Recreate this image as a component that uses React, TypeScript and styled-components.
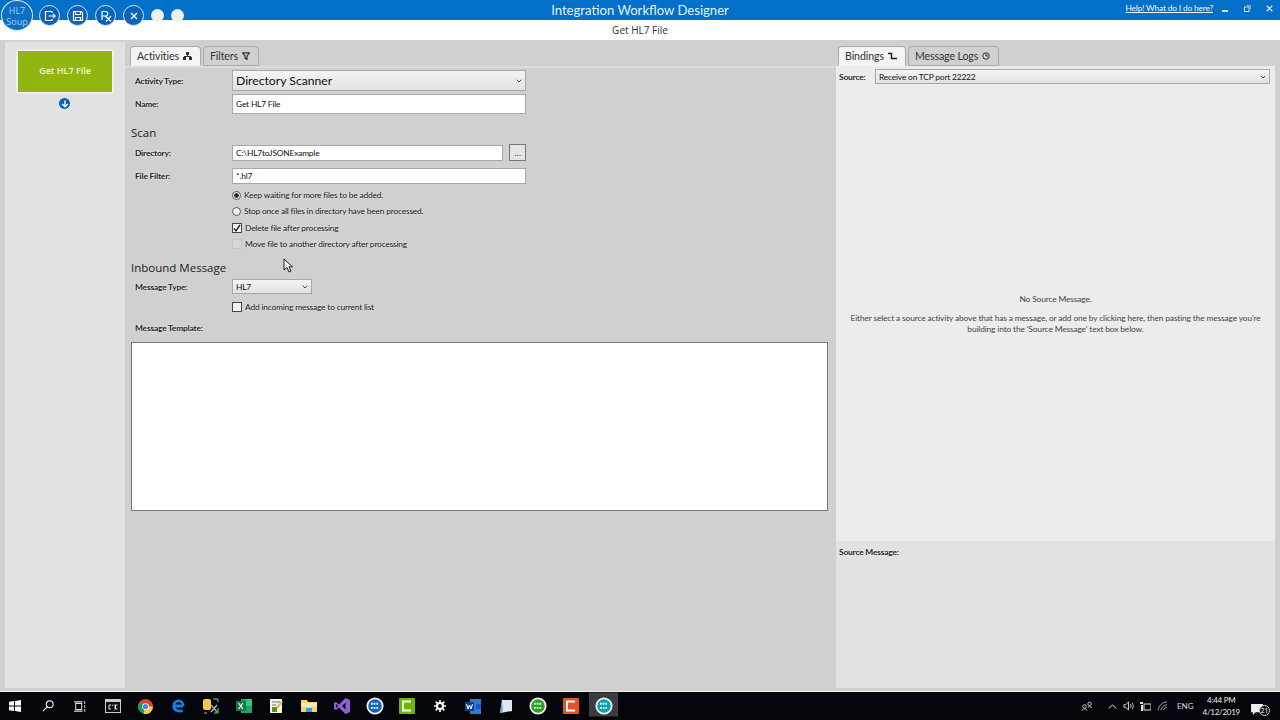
import React from "react";
import styled, { createGlobalStyle } from "styled-components";

const GlobalStyle = createGlobalStyle`
  html, body { margin: 0; padding: 0; background: #d0d0d0; }
  body { font-family: "Open Sans", "Noto Sans", "Liberation Sans", sans-serif; color: #1a1a1a; }
  * { box-sizing: border-box; }
`;

const SMALL_FONT = `font-family: Lato, "Open Sans", sans-serif; font-size: 8.4px; letter-spacing: -0.18px;`;

const TOOLBAR = ["exit", "save", "rx", "close"];

const ToolIcon: React.FC<{ kind: string }> = ({ kind }) => (
  <svg width="12" height="12" viewBox="0 0 12 12" fill="none" stroke="#fff" strokeWidth="1.2">
    {kind === "exit" && <path d="M8 3V1.500H1.500v9H8V9M4.500 6h7M9 3.800 11.200 6 9 8.200" />}
    {kind === "save" && <path d="M1.500 1.500h8l1 1v8h-9zM3.500 1.500v3h5v-3M3.500 10.500V7.500h5v3" />}
    {kind === "rx" && <path d="M2 10V1.500h3.500a2.200 2.200 0 0 1 0 4.500H2M5 6l6 5.500M11 6l-5 5.500" />}
    {kind === "close" && <path d="M3 3l6 6M9 3 3 9" strokeWidth="1.400" />}
  </svg>
);

const Diagram = () => (
  <svg width="9" height="8" viewBox="0 0 9 8" fill="#333">
    <rect x="3" y="0" width="3" height="3" />
    <rect x="0" y="5" width="3" height="3" />
    <rect x="6" y="5" width="3" height="3" />
    <rect x="4" y="3" width="1" height="2" />
    <rect x="1" y="4" width="7" height="1" />
  </svg>
);

const Funnel = () => (
  <svg width="8" height="8" viewBox="0 0 8 8" fill="none" stroke="#333" strokeWidth="1.2">
    <path d="M.5.8h7L5 4v3.400L3 6.400V4z" />
  </svg>
);

const Step = () => (
  <svg width="9" height="8" viewBox="0 0 9 8" fill="none" stroke="#222" strokeWidth="1.500">
    <path d="M0 1.500h3.500v5H9" />
  </svg>
);

const Clock = () => (
  <svg width="8" height="8" viewBox="0 0 8 8" fill="none" stroke="#333">
    <circle cx="4" cy="4" r="3.200" />
    <path d="M4 2v2h2" />
  </svg>
);

const Caret = () => (
  <svg width="6" height="4" viewBox="0 0 6 4" fill="none" stroke="#444" strokeWidth="1">
    <path d="M.7.7 3 3 5.300.7" />
  </svg>
);

const SoupBadge: React.FC<{ color: string }> = ({ color }) => (
  <svg width="18" height="18" viewBox="0 0 20 20">
    <circle cx="10" cy="10" r="9.500" fill="#f4f4f4" />
    <circle cx="10" cy="10" r="7.500" fill={color} />
    <path d="M5.500 7.500h9M5.500 12h9" stroke="#dff" strokeWidth="2" strokeDasharray="2 1" />
  </svg>
);

const TASK_ICONS: { name: string; open?: boolean; active?: boolean; icon: React.ReactNode }[] = [
  {
    name: "start",
    icon: (
      <svg width="12" height="12" viewBox="0 0 13 13" fill="#fff">
        <path d="M0 2 5.500 1.200V6H0zM6.500 1 13 0v6H6.500zM0 7h5.500v4.800L0 11zM6.500 7H13v6l-6.500-1z" />
      </svg>
    ),
  },
  {
    name: "search",
    icon: (
      <svg width="12" height="12" viewBox="0 0 14 14" fill="none" stroke="#fff" strokeWidth="1.200">
        <circle cx="9" cy="5" r="4" />
        <path d="M6 8 1 13" />
      </svg>
    ),
  },
  {
    name: "tasks",
    icon: (
      <svg width="12" height="11" viewBox="0 0 14 12" fill="none" stroke="#ddd" strokeWidth="1.200">
        <rect x="2" y="2.500" width="7" height="7" />
        <path d="M0 .6h10M0 11.400h10M12.500 0v3M12.500 4.500v3M12.500 9v3" />
      </svg>
    ),
  },
  {
    name: "console",
    icon: (
      <svg width="16" height="14" viewBox="0 0 16 14">
        <rect x=".5" y=".5" width="15" height="13" fill="#111" stroke="#ccc" />
        <rect x="1" y="1" width="14" height="2" fill="#ccc" />
        <path d="M6 6H4v4h2M8 5.500 7 7M10 5.500v5M12.500 6h-2v4h2" stroke="#ddd" fill="none" />
      </svg>
    ),
  },
  {
    name: "chrome",
    icon: (
      <svg width="15" height="15" viewBox="0 0 16 16">
        <circle cx="8" cy="8" r="8" fill="#db4437" />
        <path d="M8 8 1 4.200A8 8 0 0 0 6 15.800z" fill="#0f9d58" />
        <path d="M8 8h8a8 8 0 0 1-10 7.800z" fill="#ffcd40" />
        <circle cx="8" cy="8" r="3.600" fill="#fff" />
        <circle cx="8" cy="8" r="2.800" fill="#4285f4" />
      </svg>
    ),
  },
  {
    name: "edge",
    icon: (
      <svg width="14" height="14" viewBox="0 0 15 15" fill="none" stroke="#0a84e6" strokeWidth="3">
        <path d="M13 7.500H3M3 7.500C3 3.500 6 2 8 2s5 1.500 5 5.500M3 7.500C3 11.500 7 14 12.500 12.500" />
      </svg>
    ),
  },
  {
    name: "db",
    icon: (
      <svg width="16" height="16" viewBox="0 0 16 16">
        <rect x="0" y="1" width="8" height="11" rx="2" fill="#f2c94c" />
        <path d="M10 1h5v3M1 15h3M15 10v5h-4" stroke="#8bc48a" fill="none" />
        <path d="M8 14 14 7M8 7l6 7" stroke="#aaa" strokeWidth="1.600" />
      </svg>
    ),
  },
  {
    name: "excel",
    icon: (
      <svg width="16" height="14" viewBox="0 0 16 14">
        <rect x="5" y="0" width="11" height="14" fill="#21a366" />
        <rect x="10" y="0" width="6" height="7" fill="#33c481" />
        <rect x="0" y="2" width="10" height="10" fill="#107c41" />
        <path d="M2.500 4 7 10M7 4l-4.500 6" stroke="#fff" strokeWidth="1.200" />
      </svg>
    ),
  },
  {
    name: "notes",
    icon: (
      <svg width="15" height="16" viewBox="0 0 15 16">
        <rect x="1" y="1" width="12" height="14" fill="#f4f4e4" />
        <path d="M3 4h8M3 7h4" stroke="#777" />
        <path d="M3 13 13 3l1 1L6 13z" fill="#e0b030" />
        <rect x="3" y="9" width="5" height="5" fill="#5a8e2a" />
      </svg>
    ),
  },
  {
    name: "folder",
    open: true,
    icon: (
      <svg width="16" height="14" viewBox="0 0 16 14">
        <path d="M0 1h6l1 2h9v10H0z" fill="#f6d365" />
        <rect x="0" y="4" width="16" height="4" fill="#fbe9a8" />
        <path d="M5 13V9h6v4" fill="#3aa0d8" />
      </svg>
    ),
  },
  {
    name: "vs",
    open: true,
    icon: (
      <svg width="16" height="16" viewBox="0 0 16 16" fill="#8e5fd3">
        <path d="M11.500 0 16 2v12l-4.500 2L5 9.500 2 12 0 11V5l2-1 3 2.500zM11.500 4.500 8 8l3.500 3.500zM2 6v4l2-2z" />
      </svg>
    ),
  },
  { name: "hl7-blue", open: true, icon: <SoupBadge color="#1565c0" /> },
  {
    name: "camtasia",
    open: true,
    icon: (
      <svg width="16" height="16" viewBox="0 0 16 16">
        <rect width="16" height="16" rx="1" fill="#6ab800" />
        <path d="M12 3.500H4v9h8" stroke="#fff" strokeWidth="2" fill="none" />
      </svg>
    ),
  },
  {
    name: "gear",
    open: true,
    icon: (
      <svg width="12" height="12" viewBox="0 0 14 14" fill="none" stroke="#fff">
        <circle cx="7" cy="7" r="3.500" strokeWidth="2.500" />
        <path d="M7 0v2.500M7 11.500V14M0 7h2.500M11.500 7H14M2 2l1.800 1.800M10.200 10.200 12 12M12 2l-1.800 1.800M3.800 10.200 2 12" strokeWidth="2" />
      </svg>
    ),
  },
  {
    name: "word",
    open: true,
    icon: (
      <svg width="16" height="15" viewBox="0 0 16 15">
        <rect x="5" y="0" width="11" height="15" fill="#2b7cd3" />
        <rect x="11" y="5" width="5" height="5" fill="#185abd" />
        <rect x="0" y="3" width="9" height="9" fill="#103f91" />
        <path d="M1.500 5 3 10l1.500-4L6 10l1.500-5" stroke="#fff" fill="none" />
      </svg>
    ),
  },
  {
    name: "tablet",
    icon: (
      <svg width="15" height="15" viewBox="0 0 15 15">
        <path d="M4 1h10v11l-12 2z" fill="#dfe8ee" />
        <path d="M4 1 2 14l3-2z" fill="#6ea8c8" />
      </svg>
    ),
  },
  { name: "hl7-green", open: true, icon: <SoupBadge color="#2f9e1f" /> },
  {
    name: "camtasia-red",
    open: true,
    icon: (
      <svg width="16" height="16" viewBox="0 0 16 16">
        <rect width="16" height="16" rx="1" fill="#e8502a" />
        <path d="M12 3.500H4v9h8" stroke="#fff" strokeWidth="2" fill="none" />
      </svg>
    ),
  },
  { name: "hl7-teal", open: true, active: true, icon: <SoupBadge color="#0aa0b0" /> },
];

export default function App() {
  return (
    <Page>
      <GlobalStyle />
      <TitleBar>
        <Toolbar>
          <Logo>
            <span>HL7</span>
            <span>Soup</span>
          </Logo>
          {TOOLBAR.map(kind => (
            <ToolButton key={kind}>
              <ToolIcon kind={kind} />
            </ToolButton>
          ))}
          <GhostButton />
          <GhostButton />
        </Toolbar>
        <AppTitle>Integration Workflow Designer</AppTitle>
        <TitleRight>
          <HelpLink>Help! What do I do here?</HelpLink>
          <WindowControls>
            <svg width="7" height="7" viewBox="0 0 7 7" fill="#ddd"><rect y="5" width="6" height="2" /></svg>
            <svg width="7" height="7" viewBox="0 0 7 7" fill="none" stroke="#ddd"><rect x=".5" y="2" width="4.500" height="4.500" /><path d="M2.500 .5h4v4" stroke="#e88" /></svg>
            <svg width="7" height="7" viewBox="0 0 7 7" fill="none" stroke="#ddd" strokeWidth="1.400"><path d="M.7.7l5.600 5.600M6.300.7.700 6.300" /></svg>
          </WindowControls>
        </TitleRight>
      </TitleBar>
      <SubTitle>Get HL7 File</SubTitle>
      <Body>
        <Sidebar>
          <ActivityCard>Get HL7 File</ActivityCard>
          <DownButton>
            <svg width="8" height="8" viewBox="0 0 8 8" fill="none" stroke="#fff" strokeWidth="1.400">
              <path d="M4 .5v6M1.200 4 4 6.800 6.800 4" />
            </svg>
          </DownButton>
        </Sidebar>

        <Main>
          <TabStrip>
            <Tab $active>Activities <Diagram /></Tab>
            <Tab>Filters <Funnel /></Tab>
          </TabStrip>
          <TabRule />
          <Form>
            <Row $top={2}>
              <Label>Activity Type:</Label>
              <BigSelect $width={294}>
                <span>Directory Scanner</span>
                <Caret />
              </BigSelect>
            </Row>
            <Row $top={3}>
              <Label>Name:</Label>
              <TextBox $width={294} $height={20}>Get HL7 File</TextBox>
            </Row>
            <SectionTitle $top={10}>Scan</SectionTitle>
            <Row $top={3}>
              <Label>Directory:</Label>
              <TextBox $width={271}>C:\HL7toJSONExample</TextBox>
              <BrowseButton>...</BrowseButton>
            </Row>
            <Row $top={7}>
              <Label>File Filter:</Label>
              <TextBox $width={294}>*.hl7</TextBox>
            </Row>
            <OptionList>
              <Option>
                <Radio $checked />
                Keep waiting for more files to be added.
              </Option>
              <Option>
                <Radio />
                Stop once all files in directory have been processed.
              </Option>
              <Option>
                <CheckBox>
                  <svg width="8" height="8" viewBox="0 0 8 8" fill="none" stroke="#222" strokeWidth="1.400">
                    <path d="M1 4.500 3 6.800 7 1" />
                  </svg>
                </CheckBox>
                Delete file after processing
              </Option>
              <Option>
                <CheckBox $disabled />
                Move file to another directory after processing
              </Option>
            </OptionList>
            <SectionTitle $top={7}>Inbound Message</SectionTitle>
            <Row $top={3}>
              <Label>Message Type:</Label>
              <SmallSelect $width={80}>
                <span>HL7</span>
                <Caret />
              </SmallSelect>
            </Row>
            <IndentedOption>
              <CheckBox />
              Add incoming message to current list
            </IndentedOption>
            <TemplateLabel>Message Template:</TemplateLabel>
            <TemplateBox />
          </Form>
        </Main>

        <Inspector>
          <InspectorTabs>
            <Tab $active>Bindings <Step /></Tab>
            <Tab>Message Logs <Clock /></Tab>
          </InspectorTabs>
          <InspectorTop>
            <SourceRow>
              <SourceLabel>Source:</SourceLabel>
              <SmallSelect $grow>
                <span>Receive on TCP port 22222</span>
                <Caret />
              </SmallSelect>
            </SourceRow>
            <EmptyState>
              <p>No Source Message.</p>
              <p>
                Either select a source activity above that has a message, or add one by clicking here, then pasting the message you're
                <br />
                building into the 'Source Message' text box below.
              </p>
            </EmptyState>
          </InspectorTop>
          <InspectorBottom>
            <SourceLabel>Source Message:</SourceLabel>
          </InspectorBottom>
        </Inspector>

        <Cursor width="11" height="15" viewBox="0 0 11 15">
          <path d="M1 1v11l3-2.500 2 4.500 2-1-2-4.200h3.500z" fill="#eee" stroke="#222" />
        </Cursor>
      </Body>
      <Taskbar>
        <TaskIcons>
          {TASK_ICONS.map(item => (
            <TaskSlot key={item.name} $open={item.open} $active={item.active}>
              {item.icon}
            </TaskSlot>
          ))}
        </TaskIcons>
        <Tray>
          <PeopleIcon width="12" height="11" viewBox="0 0 14 12" fill="none" stroke="#ddd">
            <circle cx="4" cy="6" r="2" /><path d="M1 11c0-3 6-3 6 0" />
            <circle cx="10" cy="3" r="2" /><path d="M8 7c1-1 4-1 5 1" />
          </PeopleIcon>
          <svg width="9" height="5" viewBox="0 0 11 6" fill="none" stroke="#eee" strokeWidth="1.200"><path d="M1 5.500 5.500 1 10 5.500" /></svg>
          <svg width="11" height="10" viewBox="0 0 12 11" fill="none" stroke="#ddd">
            <path d="M1 4v3h2l3 3V1L3 4z" /><path d="M8 3.500c1 1 1 3 0 4M10 2c1.500 2 1.500 5 0 7" />
          </svg>
          <svg width="11" height="9" viewBox="0 0 11 9" fill="#ddd">
            <rect x="0" y="0" width="3" height="2" /><rect x="1" y="3" width="2" height="6" />
            <rect x="4" y="2" width="7" height="6" fill="none" stroke="#ddd" />
          </svg>
          <svg width="11" height="10" viewBox="0 0 12 11" fill="none" stroke="#bbb">
            <path d="M1 10C2 5 6 1 11 1M4 10c1-3 3-5 7-6M7 10c.500-1.500 2-3 4-3" />
          </svg>
          <TrayText>ENG</TrayText>
          <Clockface>
            <span>4:44 PM</span>
            <span>4/12/2019</span>
          </Clockface>
          <Notify>
            <svg width="12" height="11" viewBox="0 0 13 12" fill="#eee">
              <path d="M0 0h13v9H5L2 12V9H0z" />
            </svg>
            <NotifyBadge>21</NotifyBadge>
          </Notify>
        </Tray>
      </Taskbar>
    </Page>
  );
}

const Page = styled.div`
  position: relative;
  width: 1280px;
  height: 720px;
  overflow: hidden;
  display: flex;
  flex-direction: column;
`;

const TitleBar = styled.header`
  position: relative;
  flex: 0 0 20px;
  display: flex;
  align-items: center;
  justify-content: center;
  background: #0070c9;
`;

const Toolbar = styled.div`
  position: absolute;
  top: 0;
  left: 1px;
  display: flex;
  align-items: flex-start;
  z-index: 2;
`;

const Logo = styled.div`
  width: 32px;
  height: 31px;
  margin-right: 6px;
  border-radius: 50%;
  background: #0b6fc4;
  border: 1.500px solid #dbe9f5;
  display: flex;
  flex-direction: column;
  align-items: center;
  justify-content: center;
  color: #a9d0f0;
  font-size: 9px;
  line-height: 11px;
`;

const ToolButton = styled.div`
  width: 21px;
  height: 21px;
  margin: 5px 7px 0 0;
  border-radius: 50%;
  background: #0b63b8;
  border: 1.500px solid #d5e3f0;
  display: flex;
  align-items: center;
  justify-content: center;
`;

const GhostButton = styled.div`
  width: 13px;
  height: 13px;
  margin: 9px 7px 0 0;
  border-radius: 50%;
  background: #eef1f4;
`;

const AppTitle = styled.div`
  color: #e9f2fa;
  font-family: Lato, "Open Sans", sans-serif;
  font-size: 13.100px;
`;

const TitleRight = styled.div`
  position: absolute;
  right: 5px;
  top: 3px;
  display: flex;
  align-items: center;
`;

const HelpLink = styled.a`
  ${SMALL_FONT}
  color: #f2f8ff;
  text-decoration: underline;
  margin-right: 9px;
`;

const WindowControls = styled.div`
  display: flex;
  gap: 15px;
  margin-right: 2px;
`;

const SubTitle = styled.div`
  flex: 0 0 20px;
  background: #fff;
  text-align: center;
  font-size: 10px;
  line-height: 20px;
  color: #333;
`;

const Body = styled.main`
  position: relative;
  flex: 0 0 651px;
  display: flex;
  background: #d0d0d0;
  padding: 2px 5px 2px;
  border-bottom: 1px solid #d0d0d0;
`;

const Sidebar = styled.aside`
  flex: 0 0 120px;
  background: #e1e1e1;
  display: flex;
  flex-direction: column;
  align-items: center;
  padding-top: 7px;
`;

const ActivityCard = styled.div`
  width: 98px;
  height: 45px;
  background: #93b50f;
  border: 2px solid #f0f0f0;
  border-radius: 2px;
  color: #f2f6dc;
  font-size: 9px;
  font-weight: 600;
  display: flex;
  align-items: center;
  justify-content: center;
  padding-bottom: 2px;
`;

const DownButton = styled.div`
  width: 13px;
  height: 13px;
  margin: 3px 0 0 -1px;
  border-radius: 50%;
  background: #0b5fc0;
  border: 1px solid #f0f0f0;
  display: flex;
  align-items: center;
  justify-content: center;
`;

const Main = styled.section`
  flex: 0 0 711px;
  display: flex;
  flex-direction: column;
  padding-top: 4px;
`;

const TabStrip = styled.div`
  display: flex;
  gap: 2px;
  padding-left: 5px;
  height: 20px;
`;

const InspectorTabs = styled(TabStrip)`
  padding-left: 2px;
`;

const Tab = styled.div<{ $active?: boolean }>`
  height: 20px;
  padding: 0 8px 1px 6px;
  display: flex;
  align-items: center;
  gap: 4px;
  font-family: Lato, "Open Sans", sans-serif;
  font-size: 10.600px;
  letter-spacing: -0.1px;
  color: #333;
  background: ${p => (p.$active ? "#f4f4f4" : "#d0d0d0")};
  border: 1px solid #aaa;
  border-bottom-color: ${p => (p.$active ? "#f4f4f4" : "#aaa")};
  border-radius: 4px 4px 0 0;
`;

const TabRule = styled.div`
  height: 2px;
  background: #dcdcdc;
`;

const Form = styled.div`
  padding: 0 8px 0 6px;
  display: flex;
  flex-direction: column;
`;

const Row = styled.div<{ $top?: number }>`
  display: flex;
  align-items: center;
  margin-top: ${p => p.$top ?? 0}px;
`;

const Label = styled.label`
  ${SMALL_FONT}
  flex: 0 0 101px;
  padding-left: 4px;
  font-weight: 700;
  color: #222;
  text-shadow: 0 0 2px #fff;
`;

const selectBase = `
  display: flex;
  align-items: center;
  justify-content: space-between;
  border: 1px solid #a8a8a8;
  background: linear-gradient(#f4f4f4, #e2e2e2);
  color: #111;
`;

const BigSelect = styled.div<{ $width?: number }>`
  ${selectBase}
  width: ${p => p.$width}px;
  height: 21px;
  padding: 0 3px;
  font-family: Lato, "Open Sans", sans-serif;
  font-size: 12.200px;
`;

const SmallSelect = styled.div<{ $width?: number; $grow?: boolean }>`
  ${selectBase}
  ${SMALL_FONT}
  ${p => (p.$grow ? "flex: 1;" : `width: ${p.$width}px;`)}
  height: 15px;
  padding: 0 3px;
`;

const TextBox = styled.div<{ $width: number; $height?: number }>`
  ${SMALL_FONT}
  width: ${p => p.$width}px;
  height: ${p => p.$height ?? 16}px;
  display: flex;
  align-items: center;
  padding: 0 3px;
  background: #fff;
  border: 1px solid #a8a8a8;
  color: #111;
`;

const BrowseButton = styled.div`
  width: 17px;
  height: 17px;
  margin-left: 6px;
  border: 1px solid #777;
  background: #e4e4e4;
  display: flex;
  align-items: center;
  justify-content: center;
  font-size: 9px;
`;

const SectionTitle = styled.h2<{ $top: number }>`
  margin: ${p => p.$top}px 0 0;
  font-size: 11.500px;
  line-height: 17px;
  font-weight: 400;
  color: #222;
`;

const OptionList = styled.div`
  margin: 3px 0 0 101px;
  display: flex;
  flex-direction: column;
`;

const Option = styled.div`
  ${SMALL_FONT}
  height: 16.300px;
  display: flex;
  align-items: center;
  gap: 3px;
  color: #111;
  text-shadow: 0 0 2px #fff;
`;

const IndentedOption = styled(Option)`
  margin: 5px 0 0 101px;
`;

const Radio = styled.span<{ $checked?: boolean }>`
  width: 9px;
  height: 9px;
  border-radius: 50%;
  border: 1px solid #555;
  background: ${p => (p.$checked ? "radial-gradient(circle, #222 0 2px, #f4f4f4 2.500px)" : "#f0f0f0")};
`;

const CheckBox = styled.span<{ $disabled?: boolean }>`
  width: 10px;
  height: 10px;
  border: 1px solid ${p => (p.$disabled ? "#c4c4c4" : "#444")};
  background: ${p => (p.$disabled ? "#d8d8d8" : "#f4f4f4")};
  display: flex;
  align-items: center;
  justify-content: center;
`;

const TemplateLabel = styled(Label)`
  flex: none;
  margin-top: 7px;
  line-height: 12px;
`;

const TemplateBox = styled.div`
  height: 169px;
  margin-top: 8px;
  background: #fff;
  border: 1px solid #777;
`;

const Inspector = styled.section`
  flex: 0 0 439px;
  display: flex;
  flex-direction: column;
  padding-top: 4px;
`;

const InspectorTop = styled.div`
  flex: 0 0 475px;
  background: #ececec;
  display: flex;
  flex-direction: column;
`;

const SourceRow = styled.div`
  display: flex;
  align-items: center;
  padding: 3px 5px 0 3px;
`;

const SourceLabel = styled.span`
  ${SMALL_FONT}
  flex: 0 0 36px;
  display: block;
  font-weight: 700;
  color: #222;
  text-shadow: 0 0 2px #fff;
  white-space: nowrap;
`;

const EmptyState = styled.div`
  ${SMALL_FONT}
  letter-spacing: -0.14px;
  flex: 1;
  display: flex;
  flex-direction: column;
  align-items: center;
  padding-top: 210px;
  line-height: 11px;
  text-align: center;
  color: #444;
  white-space: nowrap;

  p {
    margin: 0 0 8px;
  }
`;

const InspectorBottom = styled.div`
  flex: 1;
  background: #e2e2e2;
  padding: 6px 3px;
`;

const Cursor = styled.svg`
  position: absolute;
  left: 283px;
  top: 218px;
`;

const Taskbar = styled.footer`
  flex: 0 0 29px;
  background: #05060c;
  border-top: 1px solid #eee;
  display: flex;
  justify-content: space-between;
`;

const TaskIcons = styled.div`
  display: flex;
  margin-left: -1.500px;
`;

const TaskSlot = styled.div<{ $open?: boolean; $active?: boolean }>`
  width: 32.730px;
  height: 100%;
  display: flex;
  align-items: center;
  justify-content: center;
  background: ${p => (p.$active ? "#3a3d42" : "transparent")};
  box-shadow: ${p => (p.$open ? "inset 0 -1.500px 0 2px #05060c, inset 0 -2px 0 #8fd3f5" : "none")};
`;

const Tray = styled.div`
  display: flex;
  align-items: center;
  gap: 6px;
  padding-right: 13px;
`;

const PeopleIcon = styled.svg`
  margin-right: 9px;
`;

const TrayText = styled.span`
  font-family: Lato, "Open Sans", sans-serif;
  color: #ddd;
  font-size: 8px;
  margin-left: 3px;
`;

const Clockface = styled.div`
  font-family: Lato, "Open Sans", sans-serif;
  display: flex;
  flex-direction: column;
  align-items: center;
  margin: 0 5px 0 3px;
  color: #e8e8e8;
  font-size: 8px;
  letter-spacing: -0.25px;
  line-height: 12px;
`;

const Notify = styled.div`
  position: relative;
  width: 16px;
  height: 16px;
`;

const NotifyBadge = styled.span`
  position: absolute;
  right: -3px;
  bottom: -2px;
  width: 11px;
  height: 11px;
  border-radius: 50%;
  background: #111;
  border: 1px solid #ccc;
  color: #fff;
  font-size: 6.500px;
  line-height: 9px;
  text-align: center;
`;
